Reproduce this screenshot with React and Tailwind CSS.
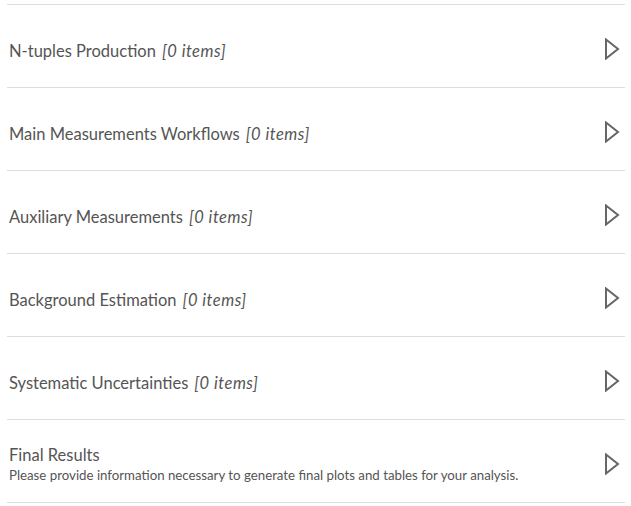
const sections = [
  { title: "N-tuples Production", count: 0 },
  { title: "Main Measurements Workflows", count: 0 },
  { title: "Auxiliary Measurements", count: 0 },
  { title: "Background Estimation", count: 0 },
  { title: "Systematic Uncertainties", count: 0 },
  {
    title: "Final Results",
    description: "Please provide information necessary to generate final plots and tables for your analysis.",
  },
];

function Arrow() {
  return (
    <svg width="16" height="22" viewBox="0 0 16 22" className="text-[#666]">
      <path d="M2 1.5 L14 11 L2 20.5 Z" fill="none" stroke="currentColor" strokeWidth="2" strokeLinejoin="miter" />
    </svg>
  );
}

export default function App() {
  return (
    <div className="min-h-screen w-full bg-white" style={{ fontFamily: "Lato, 'Open Sans', sans-serif" }}>
      <div className="ml-[7px] w-[618px]">
        <div className="h-[5px] border-b border-[#ddd]" />
        {sections.map((s) => (
          <div key={s.title} className="flex h-[83px] items-center justify-between border-b border-[#ddd] pt-[6px]">
            <div className={`pl-[2px] text-[#555] ${s.description ? "" : "pt-[3px]"}`}>
              <div className="text-[16.5px] leading-[22px]">
                {s.title}
                {s.count !== undefined && <i className="ml-[6px] tracking-[0.5px]">[{s.count} items]</i>}
              </div>
              {s.description && <div className="text-[13.25px] leading-[18px]">{s.description}</div>}
            </div>
            <div className="mr-[5px]">
              <Arrow />
            </div>
          </div>
        ))}
      </div>
    </div>
  );
}
